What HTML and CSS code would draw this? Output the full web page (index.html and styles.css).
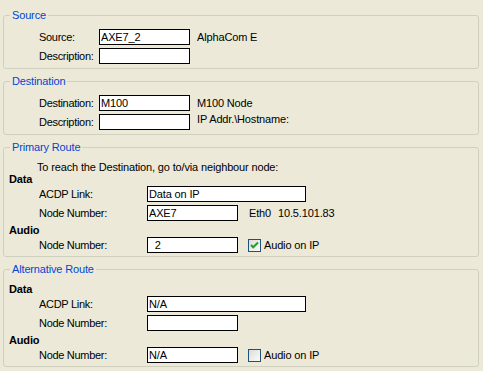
FILE: index.html
```html
<!DOCTYPE html>
<html lang="en">
<head>
    <meta charset="UTF-8">
    <title>Route Settings</title>
    <link rel="stylesheet" href="styles.css">
</head>
<body>
    <fieldset class="group">
        <legend>Source</legend>
        <div class="inner">
            <div class="row">
                <label class="lbl">Source:</label>
                <input class="field" type="text" value="AXE7_2">
                <span class="note">AlphaCom E</span>
            </div>
            <div class="row">
                <label class="lbl">Description:</label>
                <input class="field" type="text" value="">
            </div>
        </div>
    </fieldset>

    <fieldset class="group">
        <legend>Destination</legend>
        <div class="inner">
            <div class="row">
                <label class="lbl">Destination:</label>
                <input class="field" type="text" value="M100">
                <span class="note">M100 Node</span>
            </div>
            <div class="row">
                <label class="lbl">Description:</label>
                <input class="field" type="text" value="">
                <span class="note top">IP Addr.\Hostname:</span>
            </div>
        </div>
    </fieldset>

    <fieldset class="group">
        <legend>Primary Route</legend>
        <div class="inner route">
            <div class="hint">To reach the Destination, go to/via neighbour node:</div>
            <div class="head">Data</div>
            <div class="row">
                <label class="lbl">ACDP Link:</label>
                <input class="field wide" type="text" value="Data on IP">
            </div>
            <div class="row">
                <label class="lbl">Node Number:</label>
                <input class="field" type="text" value="AXE7">
                <span class="note far">Eth0</span>
                <span class="note ip">10.5.101.83</span>
            </div>
            <div class="head audio">Audio</div>
            <div class="row">
                <label class="lbl">Node Number:</label>
                <input class="field" type="text" value="  2">
                <span class="check on">
                    <svg width="11" height="11" viewBox="0 0 11 11"><polyline points="2,5 4.2,7.3 9,2.5" fill="none" stroke="#21a121" stroke-width="2"/></svg>
                </span>
                <span class="check-text">Audio on IP</span>
            </div>
        </div>
    </fieldset>

    <fieldset class="group">
        <legend>Alternative Route</legend>
        <div class="inner route">
            <div class="head">Data</div>
            <div class="row">
                <label class="lbl">ACDP Link:</label>
                <input class="field wide" type="text" value="N/A">
            </div>
            <div class="row">
                <label class="lbl">Node Number:</label>
                <input class="field" type="text" value="">
            </div>
            <div class="head audio">Audio</div>
            <div class="row">
                <label class="lbl">Node Number:</label>
                <input class="field" type="text" value="N/A">
                <span class="check"></span>
                <span class="check-text">Audio on IP</span>
            </div>
        </div>
    </fieldset>
</body>
</html>
```

FILE: styles.css
```css
body {
    margin: 0;
    padding-top: 9px;
    background-color: #ece9d8;
    font-family: "Liberation Sans", Arial, sans-serif;
    font-size: 11px;
    letter-spacing: -0.15px;
    color: #000;
    height: 371px;
    box-sizing: border-box;
    overflow: hidden;
}
.group {
    margin: 0 4px 6px 3px;
    padding: 0;
    border: 1px solid #d0d0bf;
    border-radius: 3px;
    min-width: 0;
}
.group legend {
    margin-left: 6px;
    padding: 0 2px;
    line-height: 13px;
    color: #0046d5;
}
.inner {
    padding: 7px 0 4px 35px;
}
.inner.route {
    padding: 7px 0 3px 5px;
}
.row {
    display: flex;
    align-items: center;
    height: 16px;
    margin-bottom: 3px;
}
.row:last-child {
    margin-bottom: 0;
}
.lbl {
    width: 60px;
    flex: none;
    line-height: 13px;
    letter-spacing: -0.3px;
    white-space: nowrap;
}
.route .row {
    padding-left: 30px;
}
.route .lbl {
    width: 108px;
}
.field {
    box-sizing: border-box;
    width: 91px;
    height: 16px;
    margin: 0;
    padding: 0 1px;
    border: 1px solid #000;
    background: #fff;
    font-family: "Liberation Sans", Arial, sans-serif;
    font-size: 11px;
    letter-spacing: -0.15px;
    color: #000;
    outline: none;
}
.field.wide {
    width: 159px;
}
.note {
    margin-left: 7px;
    line-height: 13px;
}
.note.top {
    align-self: flex-start;
    margin-top: -1px;
}
.note.far {
    margin-left: 11px;
}
.note.ip {
    margin-left: 7px;
}
.hint {
    padding-left: 28px;
    line-height: 12px;
}
.head {
    font-weight: bold;
    line-height: 12px;
    margin-bottom: 1px;
}
.head.audio {
    margin-top: 2px;
}
.check {
    box-sizing: border-box;
    width: 13px;
    height: 13px;
    margin-left: 10px;
    border: 1px solid #1c5180;
    background: linear-gradient(135deg, #dcdcd7, #fbfbf9);
    display: flex;
    align-items: center;
    justify-content: center;
}
.check svg {
    display: block;
}
.check-text {
    margin-left: 3px;
    line-height: 13px;
}
```
